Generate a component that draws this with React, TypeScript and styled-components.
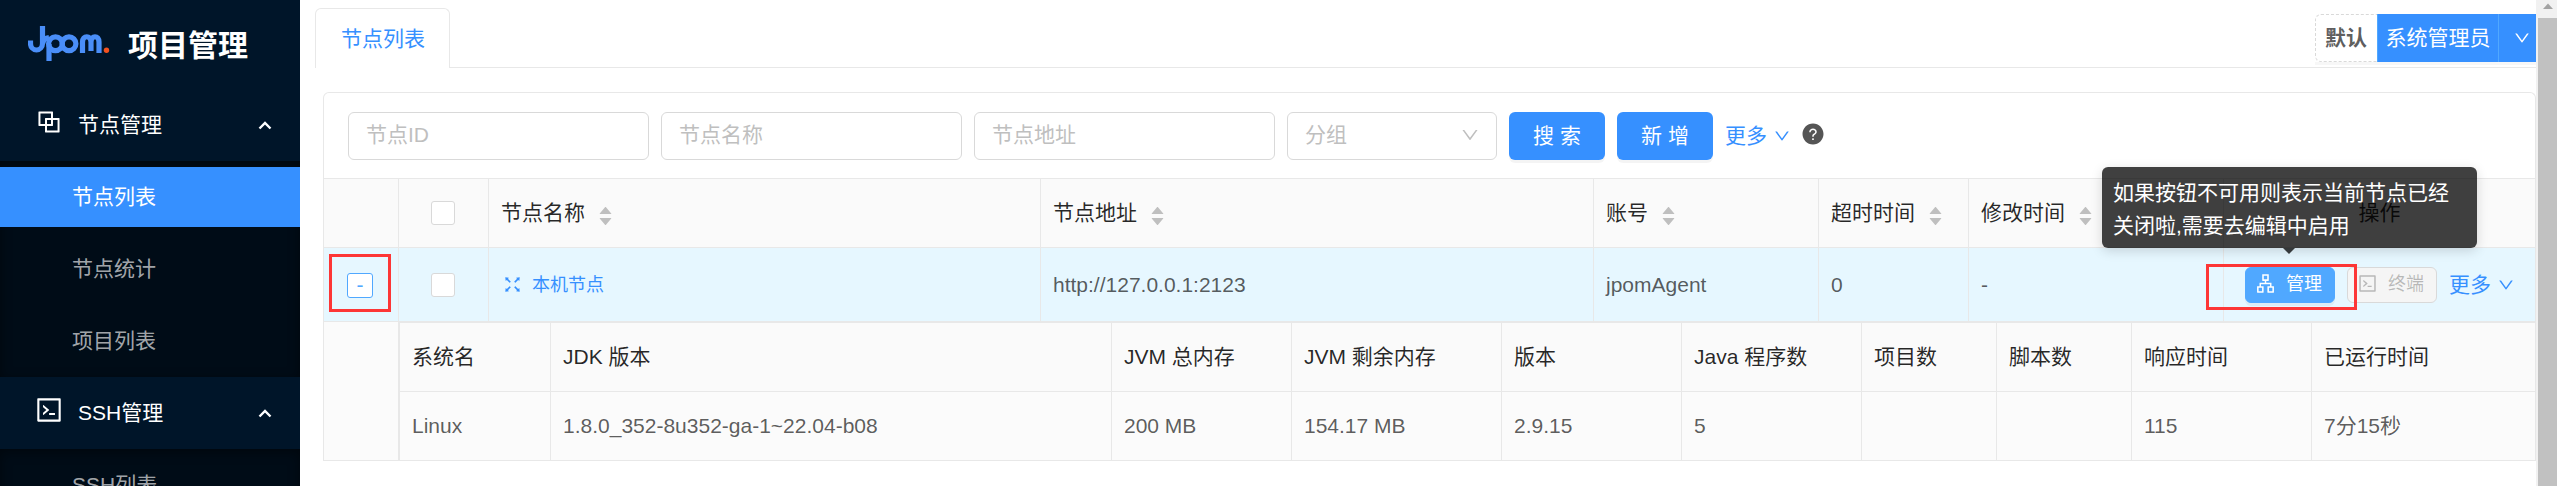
import React from 'react';
import styled, { createGlobalStyle, css } from 'styled-components';
import {
  AiFillCaretDown,
  AiFillCaretUp,
  AiFillQuestionCircle,
  AiOutlineApartment,
  AiOutlineBlock,
  AiOutlineCode,
  AiOutlineDown,
  AiOutlineFullscreen,
} from 'react-icons/ai';

const color = {
  primary: '#3690ff',
  hover: '#50a8ff',
  line: '#e8e8e8',
  control: '#d9d9d9',
  head: 'rgba(0, 0, 0, 0.85)',
  text: 'rgba(0, 0, 0, 0.65)',
  mark: '#fd3636',
};

const GlobalStyle = createGlobalStyle`
  * { box-sizing: border-box; }
  body {
    margin: 0;
    overflow: hidden;
    background: #fff;
    color: ${color.text};
    font-family: "Liberation Sans", "Noto Sans CJK SC", sans-serif;
    font-size: 21px;
    line-height: 32px;
  }
`;

const Page = styled.div`
  display: flex;
  height: 486px;
  overflow: hidden;
`;

/* ---------- sidebar ---------- */

const Sider = styled.aside`
  flex: 0 0 300px;
  background: #001529;
  color: #fff;
`;

const Brand = styled.div`
  display: flex;
  align-items: center;
  gap: 18px;
  height: 89px;
  padding: 3px 0 0 28px;
  font-size: 30px;
  font-weight: 700;
`;

const BrandName = styled.span`
  line-height: 40px;
`;

const Logo = styled.svg`
  display: block;
  width: 82px;
  height: 40px;
  margin-top: -4px;
`;

const MenuGroup = styled.div`
  display: flex;
  align-items: center;
  height: 72px;
  padding: 0 28px 0 34px;
`;

const MenuIcon = styled.span`
  display: flex;
  margin-top: -7px;
  margin-right: 14px;
  font-size: 30px;
`;

const MenuArrow = styled.svg`
  width: 14px;
  height: 10px;
  margin-left: auto;
`;

const SubMenu = styled.div`
  display: flex;
  flex-direction: column;
  gap: 12px;
  padding: 6px 0;
  background: #000c17;
  box-shadow: inset 0 3px 12px rgba(0, 0, 0, 0.45);
`;

const MenuItem = styled.div<{ $active?: boolean }>`
  height: 60px;
  padding-left: 72px;
  line-height: 60px;
  color: ${(p) => (p.$active ? '#fff' : 'rgba(255, 255, 255, 0.65)')};
  background: ${(p) => (p.$active ? color.primary : 'transparent')};
`;

/* ---------- header ---------- */

const Main = styled.main`
  flex: 0 0 2236px;
  min-width: 0;
  overflow: hidden;
`;

const TopBar = styled.header`
  display: flex;
  align-items: flex-end;
  height: 68px;
  padding-left: 15px;
`;

const Tab = styled.div`
  width: 135px;
  height: 60px;
  padding-left: 25px;
  border: 1px solid ${color.line};
  border-bottom: 0;
  border-radius: 6px 6px 0 0;
  line-height: 60px;
  color: ${color.primary};
`;

const TabRest = styled.div`
  display: flex;
  flex: 1;
  justify-content: flex-end;
  height: 54px;
  border-bottom: 1px solid ${color.line};
`;

const UserGroup = styled.div`
  display: flex;
  height: 48px;
  line-height: 46px;
  box-shadow: 0 3px 0 rgba(0, 0, 0, 0.03);
`;

const Workspace = styled.div`
  width: 62px;
  padding-left: 9px;
  border: 1px dashed ${color.control};
  border-right: 0;
  border-radius: 6px 0 0 6px;
  font-weight: 700;
`;

const UserButton = styled.div<{ $width: number; $shift?: number }>`
  display: flex;
  align-items: center;
  justify-content: center;
  width: ${(p) => p.$width}px;
  padding-left: ${(p) => p.$shift ?? 0}px;
  border-left: 1px solid ${color.hover};
  background: ${color.primary};
  color: #fff;
`;

const Chevron = styled(AiOutlineDown)<{ $size?: number }>`
  flex: none;
  font-size: ${(p) => p.$size ?? 18}px;
`;

/* ---------- card and filters ---------- */

const Card = styled.section`
  margin: 24px 0 0 23px;
  border: 1px solid ${color.line};
  border-bottom: 0;
  border-radius: 6px 6px 0 0;
`;

const Filters = styled.div`
  display: flex;
  align-items: center;
  height: 85px;
  padding-left: 24px;
`;

const Field = styled.div<{ $width?: number }>`
  display: flex;
  align-items: center;
  justify-content: space-between;
  width: ${(p) => p.$width ?? 301}px;
  height: 48px;
  margin-right: 12px;
  padding: 0 16px 1px 17px;
  border: 1px solid ${color.control};
  border-radius: 6px;
  color: #bfbfbf;
`;

const PrimaryButton = styled.div`
  width: 96px;
  height: 48px;
  margin-right: 12px;
  border-radius: 6px;
  background: ${color.primary};
  box-shadow: 0 3px 0 rgba(0, 0, 0, 0.045);
  color: #fff;
  line-height: 47px;
  text-align: center;
  white-space: pre;
`;

const More = styled.a`
  display: flex;
  align-items: center;
  gap: 6px;
  color: ${color.primary};
`;

const Help = styled(AiFillQuestionCircle)`
  margin: 0 0 3px 10px;
  font-size: 24px;
  color: #555;
`;

/* ---------- tables ---------- */

const OUTER = '75px 90px 552px 553px 225px 150px 255px 1fr';
const INNER = '151px 561px 180px 210px 180px 180px 135px 135px 180px 1fr';

const Row = styled.div<{ $cols: string; $kind: 'head' | 'hover' | 'plain'; $height: number }>`
  display: grid;
  grid-template-columns: ${(p) => p.$cols};
  height: ${(p) => p.$height}px;
  border-bottom: 1px solid ${color.line};
  background: ${(p) => (p.$kind === 'hover' ? '#e6f7ff' : p.$kind === 'head' ? '#fafafa' : '#fbfbfb')};
  color: ${(p) => (p.$kind === 'head' ? color.head : color.text)};
`;

const Cell = styled.div<{ $center?: boolean }>`
  display: flex;
  align-items: center;
  min-width: 0;
  padding: 0 12px;
  white-space: nowrap;
  ${(p) =>
    p.$center &&
    css`
      justify-content: center;
      padding: 0;
    `}
  &:not(:last-child) {
    border-right: 1px solid ${color.line};
    ${(p) => p.$center && 'padding-right: 2px;'}
  }
`;

const NodeTable = styled.div`
  border-top: 1px solid ${color.line};
`;

const Expanded = styled.div`
  display: grid;
  grid-template-columns: 75px 1fr;
  border-bottom: 1px solid ${color.line};
  background: #fbfbfb;
`;

const ExpandedSpacer = styled.div`
  border-right: 1px solid ${color.line};
`;

const StatusTable = styled.div`
  border-top: 1px solid ${color.line};
  border-left: 1px solid ${color.line};

  & > :last-child {
    border-bottom: 0;
  }
`;

const SorterBox = styled.span`
  display: flex;
  flex-direction: column;
  margin: 5px 0 0 12px;
  font-size: 17px;
  color: #bfbfbf;

  svg + svg {
    margin-top: -6px;
  }
`;

const Checkbox = styled.span`
  width: 24px;
  height: 24px;
  border: 1px solid ${color.control};
  border-radius: 3px;
  background: #fff;
`;

const ExpandMark = styled.div`
  display: flex;
  align-items: center;
  justify-content: center;
  width: 62px;
  height: 58px;
  margin-bottom: 3px;
  border: 3px solid ${color.mark};
`;

const ExpandButton = styled.span`
  width: 26px;
  height: 25px;
  margin-top: 5px;
  border: 1px solid ${color.hover};
  border-radius: 3px;
  background: #fff;
  color: ${color.hover};
  line-height: 21px;
  text-align: center;
`;

const NodeLink = styled.a`
  display: flex;
  align-items: center;
  gap: 9px;
  margin-left: 1px;
  font-size: 18px;
  color: ${color.primary};

  svg {
    font-size: 21px;
  }
`;

const Actions = styled.div`
  position: relative;
  display: flex;
  align-items: center;
  padding-left: 21px;
`;

const SmallButton = styled.span<{ $disabled?: boolean }>`
  display: flex;
  align-items: center;
  gap: 10px;
  width: 90px;
  height: 36px;
  margin-right: 12px;
  padding: 0 0 2px 9px;
  border: 1px solid ${(p) => (p.$disabled ? color.control : color.hover)};
  border-radius: 6px;
  background: ${(p) => (p.$disabled ? '#f5f5f5' : color.hover)};
  box-shadow: ${(p) => (p.$disabled ? 'none' : '0 3px 0 rgba(0, 0, 0, 0.045)')};
  color: ${(p) => (p.$disabled ? 'rgba(0, 0, 0, 0.25)' : '#fff')};
  font-size: 18px;

  svg {
    flex: none;
    font-size: 21px;
  }
`;

const ManageMark = styled.div`
  position: absolute;
  top: 16px;
  left: -18px;
  width: 151px;
  height: 46px;
  border: 3px solid ${color.mark};
`;

const Tooltip = styled.div`
  position: absolute;
  z-index: 2;
  left: -122px;
  bottom: 73px;
  width: 375px;
  height: 81px;
  padding: 9px 11px;
  border-radius: 6px;
  background: rgba(0, 0, 0, 0.75);
  box-shadow: 0 3px 12px rgba(0, 0, 0, 0.15);
  color: #fff;
  line-height: 33px;
  white-space: nowrap;

  &::after {
    content: '';
    position: absolute;
    top: 100%;
    left: 181px;
    border: 6px solid transparent;
    border-top-color: rgba(0, 0, 0, 0.75);
    border-bottom: 0;
  }
`;

/* ---------- scrollbar ---------- */

const Scrollbar = styled.div`
  display: flex;
  flex: 1;
  flex-direction: column;
  align-items: flex-end;
  background: #f1f1f1;
`;

const ScrollArrow = styled.svg`
  width: 18px;
  height: 18px;
`;

const ScrollThumb = styled.div`
  flex: 1;
  width: 19px;
  background: #c1c1c1;
`;

const Sorter = () => (
  <SorterBox>
    <AiFillCaretUp />
    <AiFillCaretDown />
  </SorterBox>
);

const Group = ({ icon, label }: { icon: React.ReactNode; label: string }) => (
  <MenuGroup>
    <MenuIcon>{icon}</MenuIcon>
    {label}
    <MenuArrow viewBox="0 0 14 10">
      <path d="M1.500 8.500 7 3l5.500 5.500" fill="none" stroke="#fff" strokeWidth="2.400" />
    </MenuArrow>
  </MenuGroup>
);

const statusHead = ['系统名', 'JDK 版本', 'JVM 总内存', 'JVM 剩余内存', '版本', 'Java 程序数', '项目数', '脚本数', '响应时间', '已运行时间'];
const statusRow = ['Linux', '1.8.0_352-8u352-ga-1~22.04-b08', '200 MB', '154.17 MB', '2.9.15', '5', '', '', '115', '7分15秒'];
const nodeHead = ['节点名称', '节点地址', '账号', '超时时间', '修改时间'];

export default function App() {
  return (
    <Page>
      <GlobalStyle />
      <Sider>
        <Brand>
          <Logo viewBox="28 24 82 40">
            <g fill="none" stroke="#4a8ef8" strokeWidth="5.200">
              <path d="M42.500 26V43.500A6 6.500 0 0 1 30.500 43.500V40.500" />
              <path d="M49 44V61M42.500 43.500C44 38.500 46 38 49 37.500" />
              <circle cx="55.500" cy="43.800" r="6.900" />
              <circle cx="69" cy="43.800" r="6.900" />
              <path d="M82.500 53V42C82.500 35 91 35 91 42V51M91 42C91 35 99 35 99 42V53" />
            </g>
            <circle cx="106.500" cy="50.300" r="2.700" fill="#f4511e" />
          </Logo>
          <BrandName>项目管理</BrandName>
        </Brand>
        <Group icon={<AiOutlineBlock />} label="节点管理" />
        <SubMenu>
          <MenuItem $active>节点列表</MenuItem>
          <MenuItem>节点统计</MenuItem>
          <MenuItem>项目列表</MenuItem>
        </SubMenu>
        <Group icon={<AiOutlineCode />} label="SSH管理" />
        <SubMenu>
          <MenuItem>SSH列表</MenuItem>
        </SubMenu>
      </Sider>

      <Main>
        <TopBar>
          <Tab>节点列表</Tab>
          <TabRest>
            <UserGroup>
              <Workspace>默认</Workspace>
              <UserButton $width={121}>系统管理员</UserButton>
              <UserButton $width={38} $shift={9}>
                <Chevron />
              </UserButton>
            </UserGroup>
          </TabRest>
        </TopBar>

        <Card>
          <Filters>
            <Field>节点ID</Field>
            <Field>节点名称</Field>
            <Field>节点地址</Field>
            <Field $width={210}>
              分组
              <Chevron $size={20} />
            </Field>
            <PrimaryButton>搜 索</PrimaryButton>
            <PrimaryButton>新 增</PrimaryButton>
            <More>
              更多
              <Chevron />
            </More>
            <Help />
          </Filters>

          <NodeTable>
            <Row $cols={OUTER} $kind="head" $height={69}>
              <Cell />
              <Cell $center>
                <Checkbox />
              </Cell>
              {nodeHead.map((label) => (
                <Cell key={label}>
                  {label}
                  <Sorter />
                </Cell>
              ))}
              <Cell $center>操作</Cell>
            </Row>
            <Row $cols={OUTER} $kind="hover" $height={74}>
              <Cell $center>
                <ExpandMark>
                  <ExpandButton>-</ExpandButton>
                </ExpandMark>
              </Cell>
              <Cell $center>
                <Checkbox />
              </Cell>
              <Cell>
                <NodeLink>
                  <AiOutlineFullscreen />
                  本机节点
                </NodeLink>
              </Cell>
              <Cell>http://127.0.0.1:2123</Cell>
              <Cell>jpomAgent</Cell>
              <Cell>0</Cell>
              <Cell>-</Cell>
              <Actions>
                <SmallButton>
                  <AiOutlineApartment />
                  管理
                </SmallButton>
                <SmallButton $disabled>
                  <AiOutlineCode />
                  终端
                </SmallButton>
                <More>
                  更多
                  <Chevron />
                </More>
                <ManageMark />
                <Tooltip>
                  如果按钮不可用则表示当前节点已经
                  <br />
                  关闭啦,需要去编辑中启用
                </Tooltip>
              </Actions>
            </Row>
            <Expanded>
              <ExpandedSpacer />
              <StatusTable>
                <Row $cols={INNER} $kind="head" $height={69}>
                  {statusHead.map((label) => (
                    <Cell key={label}>{label}</Cell>
                  ))}
                </Row>
                <Row $cols={INNER} $kind="plain" $height={68}>
                  {statusRow.map((value, i) => (
                    <Cell key={statusHead[i]}>{value}</Cell>
                  ))}
                </Row>
              </StatusTable>
            </Expanded>
          </NodeTable>
        </Card>
      </Main>

      <Scrollbar>
        <ScrollArrow viewBox="0 0 18 18">
          <path d="M4 9 9 3.500 14 9Z" fill="#a3a3a3" />
        </ScrollArrow>
        <ScrollThumb />
      </Scrollbar>
    </Page>
  );
}
